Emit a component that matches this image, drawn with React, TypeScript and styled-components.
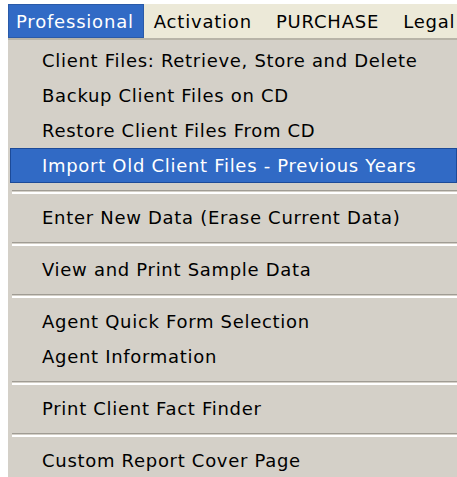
import React from "react";
import styled, { createGlobalStyle } from "styled-components";

const Global = createGlobalStyle`
  html, body { margin: 0; padding: 0; background: #ffffff; }
  body { font-family: "DejaVu Sans", "Liberation Sans", sans-serif; }
`;

const Page = styled.div`
  padding: 4px 0 0 8px;
  width: 457px;
  height: 477px;
  box-sizing: border-box;
  overflow: hidden;
`;

const MenuBar = styled.div`
  display: flex;
  height: 34px;
  align-items: stretch;
  background: #ece9d8;
  border-bottom: 2px solid #b8b4a8;
`;

const BarItem = styled.div<{ $active?: boolean }>`
  display: flex;
  align-items: center;
  padding: ${(p) => (p.$active ? "0 10px 0 8px" : "0 14px 0 10px")};
  font-size: 18px;
  letter-spacing: 0.8px;
  color: ${(p) => (p.$active ? "#ffffff" : "#000000")};
  background: ${(p) => (p.$active ? "#316ac5" : "transparent")};
  box-shadow: ${(p) => (p.$active ? "inset 0 0 0 1px #2a5aa8" : "none")};
  white-space: nowrap;
`;

const Dropdown = styled.div`
  background: #d4d0c8;
  padding: 3px 0 0 2px;
  display: flex;
  flex-direction: column;
`;

const Item = styled.div<{ $active?: boolean }>`
  height: 35px;
  display: flex;
  align-items: center;
  padding-left: 31px;
  font-size: 18px;
  letter-spacing: 0.7px;
  white-space: nowrap;
  box-sizing: border-box;
  color: ${(p) => (p.$active ? "#ffffff" : "#000000")};
  background: ${(p) => (p.$active ? "#316ac5" : "transparent")};
  border: 1px solid ${(p) => (p.$active ? "#1c4a98" : "transparent")};
`;

const Separator = styled.div`
  height: 17px;
  display: flex;
  align-items: center;
  padding-left: 2px;
  &::after {
    content: "";
    flex: 1;
    height: 1px;
    border-top: 1px solid #a09c94;
    border-bottom: 2px solid #ffffff;
  }
`;

type Entry = { label: string; active?: boolean } | "sep";

const entries: Entry[] = [
  { label: "Client Files: Retrieve, Store and Delete" },
  { label: "Backup Client Files on CD" },
  { label: "Restore Client Files From CD" },
  { label: "Import Old Client Files - Previous Years", active: true },
  "sep",
  { label: "Enter New Data (Erase Current Data)" },
  "sep",
  { label: "View and Print Sample Data" },
  "sep",
  { label: "Agent Quick Form Selection" },
  { label: "Agent Information" },
  "sep",
  { label: "Print Client Fact Finder" },
  "sep",
  { label: "Custom Report Cover Page" },
];

export default function App() {
  return (
    <Page>
      <Global />
      <MenuBar>
        <BarItem $active>Professional</BarItem>
        <BarItem>Activation</BarItem>
        <BarItem>PURCHASE</BarItem>
        <BarItem>Legal</BarItem>
      </MenuBar>
      <Dropdown>
        {entries.map((e, i) =>
          e === "sep" ? (
            <Separator key={i} />
          ) : (
            <Item key={i} $active={e.active}>
              {e.label}
            </Item>
          )
        )}
      </Dropdown>
    </Page>
  );
}
